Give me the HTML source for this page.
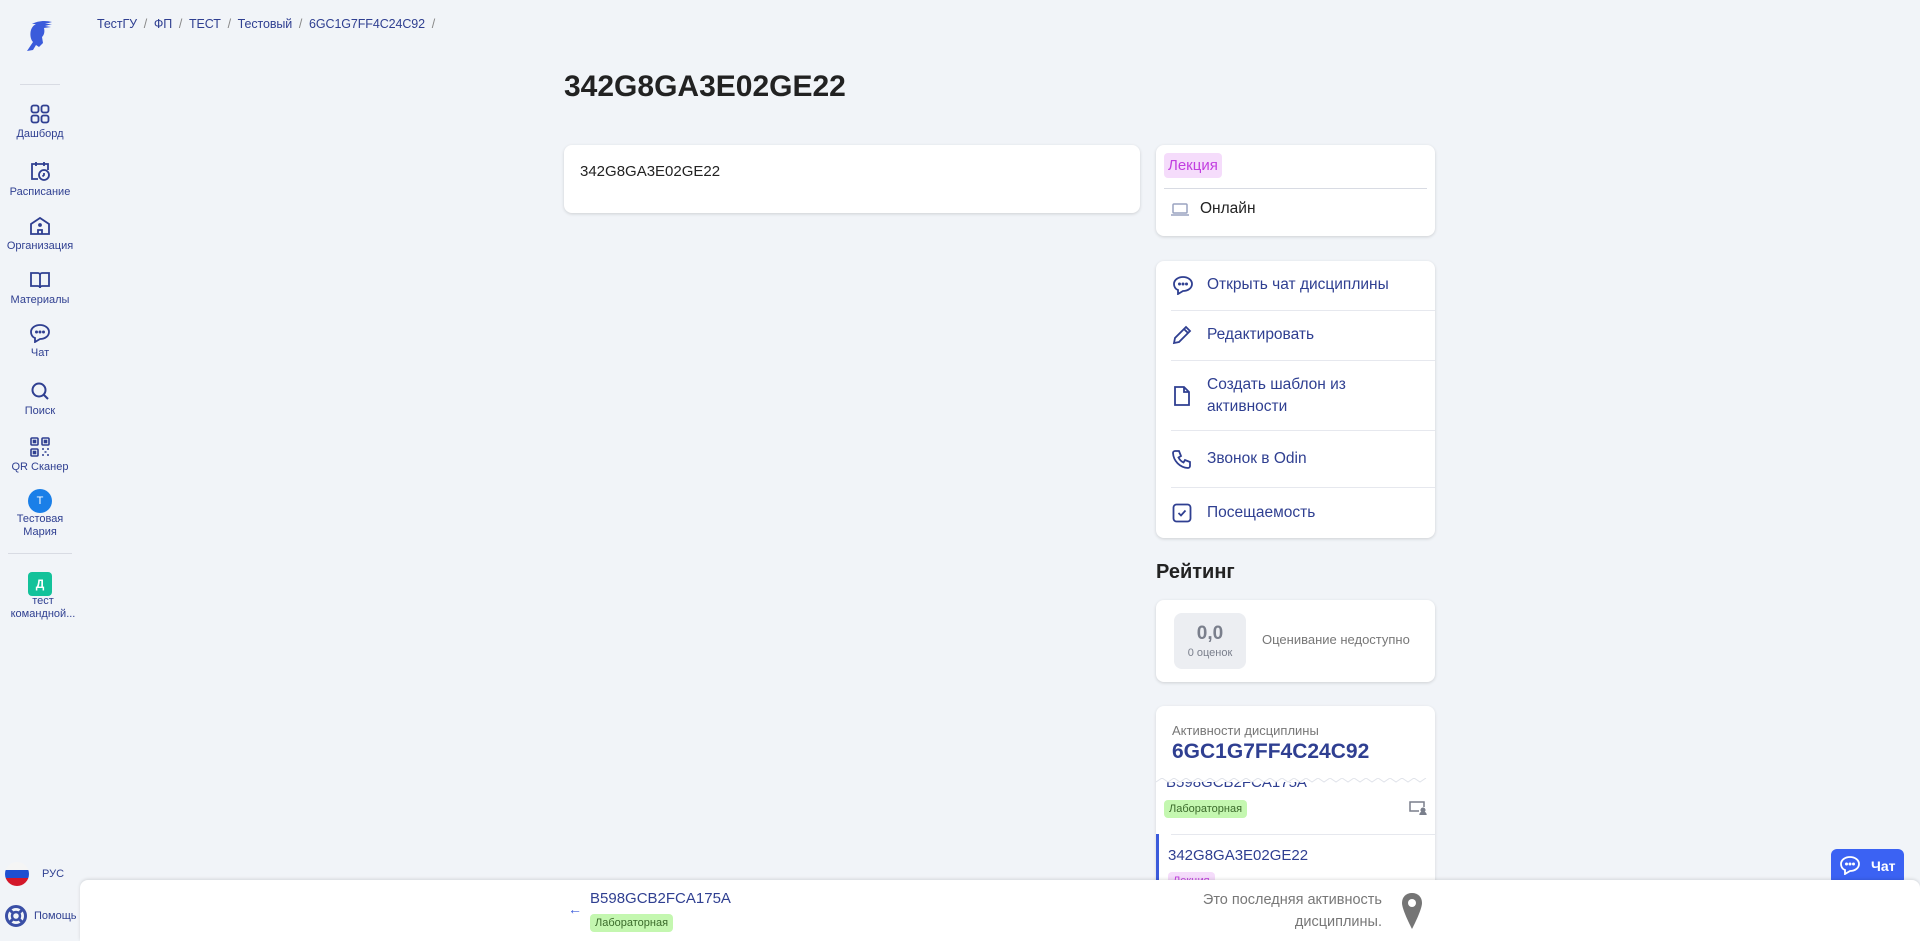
<!DOCTYPE html>
<html><head><meta charset="utf-8"><style>
*{box-sizing:border-box;margin:0;padding:0}
body{width:1920px;height:941px;overflow:hidden;background:#f1f4f8;font-family:"Liberation Sans",sans-serif;position:relative;color:#222}
.a{position:absolute}
.nav{position:absolute;left:0;width:80px;text-align:center;color:#2f3f91;font-size:11px;line-height:13px}
.nav svg{display:block;margin:0 auto 4px}
.card{position:absolute;background:#fff;border-radius:8px;box-shadow:0 1px 3px rgba(0,0,0,.15)}
.act{position:absolute;left:0;right:0;display:flex;align-items:center;color:#2f3f91;font-size:15.5px}
.act svg{position:absolute;left:16px}
.act span{margin-left:51px;line-height:22px}
.dv{position:absolute;left:15px;right:0;height:1px;background:#e6e8ee}
.tag{display:inline-block;border-radius:4px;font-size:11px;padding:3px 5px}
</style></head><body>

<!-- sidebar -->
<svg class="a" style="left:23px;top:19px" width="32" height="32" viewBox="0 0 32 32"><path d="M9 5c5-3 13-4 20-2l-7 2 7 0-7 2 6 1-7 1c1 4 0 7-2 9l1 6-4 4-3-2-3 5-6 1 6-9c-3-3-3-9-2-12 1-3 3-5 5-6z" fill="#3b5bdb"/></svg>
<div class="a" style="left:20px;top:84px;width:40px;height:1px;background:#d8dbe3"></div>
<div class="nav" style="top:104px"><svg width="20" height="20" viewBox="0 0 20 20" fill="none" stroke="#2f3f91" stroke-width="1.8"><rect x="1.5" y="1.5" width="7" height="7" rx="2"/><rect x="11.5" y="1.5" width="7" height="7" rx="2"/><rect x="1.5" y="11.5" width="7" height="7" rx="2"/><rect x="11.5" y="11.5" width="7" height="7" rx="2"/></svg>Дашборд</div>
<div class="nav" style="top:160px"><svg width="22" height="22" viewBox="0 0 22 22" fill="none" stroke="#2f3f91" stroke-width="1.8"><path d="M9 19H3V4h16v6M7 2v4M15 2v4"/><circle cx="15" cy="15" r="5"/><path d="M15 13v2l-1.5 1.5"/></svg>Расписание</div>
<div class="nav" style="top:216px"><svg width="22" height="20" viewBox="0 0 22 20" fill="none" stroke="#2f3f91" stroke-width="1.8"><path d="M2 18V8l9-6 9 6v10zM9 18v-4h4v4"/><circle cx="11" cy="9" r="1"/></svg>Организация</div>
<div class="nav" style="top:270px"><svg width="22" height="20" viewBox="0 0 22 20" fill="none" stroke="#2f3f91" stroke-width="1.8"><path d="M2 3h7a2 2 0 0 1 2 2v13a2 2 0 0 0-2-2H2zM20 3h-7a2 2 0 0 0-2 2v13a2 2 0 0 1 2-2h7z"/></svg>Материалы</div>
<div class="nav" style="top:323px"><svg width="22" height="20" viewBox="0 0 22 20" fill="none" stroke="#2f3f91" stroke-width="1.8"><path d="M11 2c5 0 9 3 9 7s-4 7-9 7l-5 3v-4C3 14 2 11 2 9c0-4 4-7 9-7z"/><circle cx="7.5" cy="9" r=".6" fill="#2f3f91"/><circle cx="11" cy="9" r=".6" fill="#2f3f91"/><circle cx="14.5" cy="9" r=".6" fill="#2f3f91"/></svg>Чат</div>
<div class="nav" style="top:381px"><svg width="20" height="20" viewBox="0 0 20 20" fill="none" stroke="#2f3f91" stroke-width="2"><circle cx="9" cy="9" r="6.5"/><path d="M14 14l4 4"/></svg>Поиск</div>
<div class="nav" style="top:437px"><svg width="20" height="20" viewBox="0 0 20 20" fill="none" stroke="#2f3f91" stroke-width="1.6"><rect x="1" y="1" width="7" height="7" rx="1"/><rect x="12" y="1" width="7" height="7" rx="1"/><rect x="1" y="12" width="7" height="7" rx="1"/><rect x="3.5" y="3.5" width="2" height="2" fill="#2f3f91"/><rect x="14.5" y="3.5" width="2" height="2" fill="#2f3f91"/><rect x="3.5" y="14.5" width="2" height="2" fill="#2f3f91"/><path d="M12 12h2M17 12h2M14.5 15h2M12 18h2M17 18h2"/></svg>QR Сканер</div>
<div class="a" style="left:28px;top:489px;width:24px;height:24px;border-radius:50%;background:#1a7fe8;color:#fff;font-size:11px;line-height:24px;text-align:center">Т</div>
<div class="nav" style="top:513px">Тестовая<br>Мария</div>
<div class="a" style="left:8px;top:553px;width:64px;height:1px;background:#d8dbe3"></div>
<div class="a" style="left:28px;top:572px;width:24px;height:24px;border-radius:4px;background:#13c29a;color:#fff;font-size:12px;line-height:24px;text-align:center;font-weight:bold">Д</div>
<div class="nav" style="top:595px;left:3px">тест<br>командной...</div>
<div class="a" style="left:5px;top:862px;width:24px;height:24px;border-radius:50%;overflow:hidden;background:linear-gradient(#f5f5f5 0 33%,#1f4fd1 33% 66%,#d3172a 66%)"></div>
<div class="a" style="left:42px;top:868px;font-size:11px;color:#2f3f91">РУС</div>
<svg class="a" style="left:5px;top:905px" width="22" height="22" viewBox="0 0 22 22"><circle cx="11" cy="11" r="9.5" fill="none" stroke="#3a4fa6" stroke-width="3"/><circle cx="11" cy="11" r="4" fill="none" stroke="#3a4fa6" stroke-width="2.5"/><path d="M4 4l4 4M18 4l-4 4M4 18l4-4M18 18l-4-4" stroke="#3a4fa6" stroke-width="3"/></svg>
<div class="a" style="left:34px;top:910px;font-size:11px;color:#2f3f91">Помощь</div>

<!-- breadcrumb -->
<div class="a" style="left:97px;top:17px;font-size:12.5px;color:#2f3f91;letter-spacing:-0.1px">ТестГУ &nbsp;<span style="color:#888">/</span>&nbsp; ФП &nbsp;<span style="color:#888">/</span>&nbsp; ТЕСТ &nbsp;<span style="color:#888">/</span>&nbsp; Тестовый &nbsp;<span style="color:#888">/</span>&nbsp; 6GC1G7FF4C24C92 &nbsp;<span style="color:#888">/</span></div>

<div class="a" style="left:564px;top:70px;font-size:30px;font-weight:bold;color:#222">342G8GA3E02GE22</div>

<div class="card" style="left:564px;top:145px;width:576px;height:68px"><div class="a" style="left:16px;top:18px;font-size:15px">342G8GA3E02GE22</div></div>

<div class="card" style="left:1156px;top:145px;width:279px;height:91px">
<div class="a" style="left:8px;top:8px;background:#f5dcfb;color:#c23fe0;font-size:15px;padding:4px 4px;border-radius:4px">Лекция</div>
<div class="a" style="left:8px;right:8px;top:43px;height:1px;background:#d8dbe3"></div>
<svg class="a" style="left:14px;top:57px" width="20" height="16" viewBox="0 0 20 16" fill="none" stroke="#9aa3c0" stroke-width="1.5"><rect x="3" y="2" width="14" height="9" rx="1"/><path d="M1 13h18"/></svg>
<div class="a" style="left:44px;top:55px;font-size:15.5px;color:#222">Онлайн</div>
</div>

<div class="card" style="left:1156px;top:261px;width:279px;height:277px">
<div class="act" style="top:13px;height:22px"><svg width="22" height="20" viewBox="0 0 22 20" fill="none" stroke="#2f3f91" stroke-width="1.8"><path d="M11 2c5 0 9 3 9 7s-4 7-9 7l-5 3v-4C3 14 2 11 2 9c0-4 4-7 9-7z"/><circle cx="7.5" cy="9" r=".6" fill="#2f3f91"/><circle cx="11" cy="9" r=".6" fill="#2f3f91"/><circle cx="14.5" cy="9" r=".6" fill="#2f3f91"/></svg><span>Открыть чат дисциплины</span></div>
<div class="dv" style="top:49px"></div>
<div class="act" style="top:63px;height:22px"><svg width="20" height="20" viewBox="0 0 20 20" fill="none" stroke="#2f3f91" stroke-width="1.8"><path d="M2 18l1-5L14 2l4 4L7 17zM12 4l4 4"/></svg><span>Редактировать</span></div>
<div class="dv" style="top:99px"></div>
<div class="act" style="top:112px;height:46px"><svg width="20" height="22" viewBox="0 0 20 22" fill="none" stroke="#2f3f91" stroke-width="1.8"><path d="M3 2h9l5 5v13H3zM12 2v5h5"/></svg><span>Создать шаблон из<br>активности</span></div>
<div class="dv" style="top:169px"></div>
<div class="act" style="top:187px;height:22px"><svg width="20" height="20" viewBox="0 0 20 20" fill="none" stroke="#2f3f91" stroke-width="1.8"><path d="M3 2h4l2 5-2.5 1.5a11 11 0 0 0 5 5L13 11l5 2v4a2 2 0 0 1-2 2A16 16 0 0 1 1 4a2 2 0 0 1 2-2z"/></svg><span>Звонок в Odin</span></div>
<div class="dv" style="top:226px"></div>
<div class="act" style="top:241px;height:22px"><svg width="20" height="20" viewBox="0 0 20 20" fill="none" stroke="#2f3f91" stroke-width="1.8"><rect x="1.5" y="1.5" width="17" height="17" rx="3"/><path d="M6.5 10l2.5 2.5 4.5-5"/></svg><span>Посещаемость</span></div>
</div>

<div class="a" style="left:1156px;top:561px;font-size:20px;font-weight:bold;color:#222">Рейтинг</div>

<div class="card" style="left:1156px;top:600px;width:279px;height:82px">
<div class="a" style="left:18px;top:13px;width:72px;height:56px;background:#eceef2;border-radius:8px;text-align:center;color:#7a7f8c"><div style="font-size:19px;font-weight:bold;margin-top:10px">0,0</div><div style="font-size:11px;margin-top:2px">0 оценок</div></div>
<div class="a" style="left:106px;top:32px;font-size:13px;color:#777">Оценивание недоступно</div>
</div>

<div class="card" style="left:1156px;top:706px;width:279px;height:232px;overflow:hidden;box-shadow:0 1px 3px rgba(0,0,0,.12)">
<div class="a" style="left:16px;top:17px;font-size:13px;color:#777">Активности дисциплины</div>
<div class="a" style="left:16px;top:34px;font-size:21px;font-weight:bold;color:#2f3f91">6GC1G7FF4C24C92</div>
<div class="a" style="left:10px;top:68px;font-size:15px;color:#2f3f91;clip-path:inset(8px 0 0 0)">B598GCB2FCA175A</div>
<svg class="a" style="left:0;top:72px" width="279" height="8"><path d="M0 4 l6 -4 6 4 6-4 6 4 6-4 6 4 6-4 6 4 6-4 6 4 6-4 6 4 6-4 6 4 6-4 6 4 6-4 6 4 6-4 6 4 6-4 6 4 6-4 6 4 6-4 6 4 6-4 6 4 6-4 6 4 6-4 6 4 6-4 6 4 6-4 6 4 6-4 6 4 6-4 6 4 6-4 6 4 6-4 6 4 6-4" fill="none" stroke="#e0e3ea" stroke-width="1"/></svg>
<div class="a tag" style="left:8px;top:94px;background:#c4f7b0;color:#3a6a2a">Лабораторная</div>
<svg class="a" style="left:253px;top:95px" width="18" height="14" viewBox="0 0 18 14" fill="none" stroke="#7a7f8c" stroke-width="1.5"><path d="M10 10H1V1h14v5"/><circle cx="14" cy="9" r="1.8" fill="#7a7f8c"/><path d="M11 14a3 3 0 0 1 6 0" fill="#7a7f8c"/></svg>
<div class="a" style="left:15px;right:0;top:128px;height:1px;background:#e6e8ee"></div>
<div class="a" style="left:0;top:128px;width:3px;height:60px;background:#3b5bdb"></div>
<div class="a" style="left:12px;top:141px;font-size:15px;color:#2f3f91">342G8GA3E02GE22</div>
<div class="a tag" style="left:12px;top:166px;background:#f5dcfb;color:#c23fe0">Лекция</div>
</div>

<!-- chat button -->
<div class="a" style="left:1831px;top:849px;width:73px;height:36px;background:#3b62f3;border-radius:6px;color:#fff;font-size:14px;font-weight:bold">
<svg class="a" style="left:8px;top:6px" width="22" height="20" viewBox="0 0 22 20" fill="none" stroke="#fff" stroke-width="1.8"><path d="M11 2c5 0 9 3 9 7s-4 7-9 7l-5 3v-4C3 14 2 11 2 9c0-4 4-7 9-7z"/><circle cx="7.5" cy="9" r=".6" fill="#fff"/><circle cx="11" cy="9" r=".6" fill="#fff"/><circle cx="14.5" cy="9" r=".6" fill="#fff"/></svg>
<div class="a" style="left:40px;top:9px">Чат</div></div>

<!-- bottom bar -->
<div class="a" style="left:80px;top:880px;width:1840px;height:61px;background:#fff;border-radius:8px 8px 0 0;box-shadow:0 -1px 3px rgba(0,0,0,.12)">
<div class="a" style="left:488px;top:21px;color:#3b5bdb;font-size:14px">←</div>
<div class="a" style="left:510px;top:10px;font-size:15px;color:#2f3f91">B598GCB2FCA175A</div>
<div class="a tag" style="left:510px;top:34px;background:#c4f7b0;color:#3a6a2a">Лабораторная</div>
<div class="a" style="left:1000px;width:302px;top:9px;font-size:14.5px;color:#777;text-align:right;line-height:22px">Это последняя активность<br>дисциплины.</div>
<svg class="a" style="left:1320px;top:12px" width="24" height="38" viewBox="0 0 24 38"><path d="M12 1C6 1 2 5 2 11c0 7 10 26 10 26s10-19 10-26C22 5 18 1 12 1z" fill="#757575"/><circle cx="12" cy="11" r="4" fill="#fff"/></svg>
</div>
</body></html>
